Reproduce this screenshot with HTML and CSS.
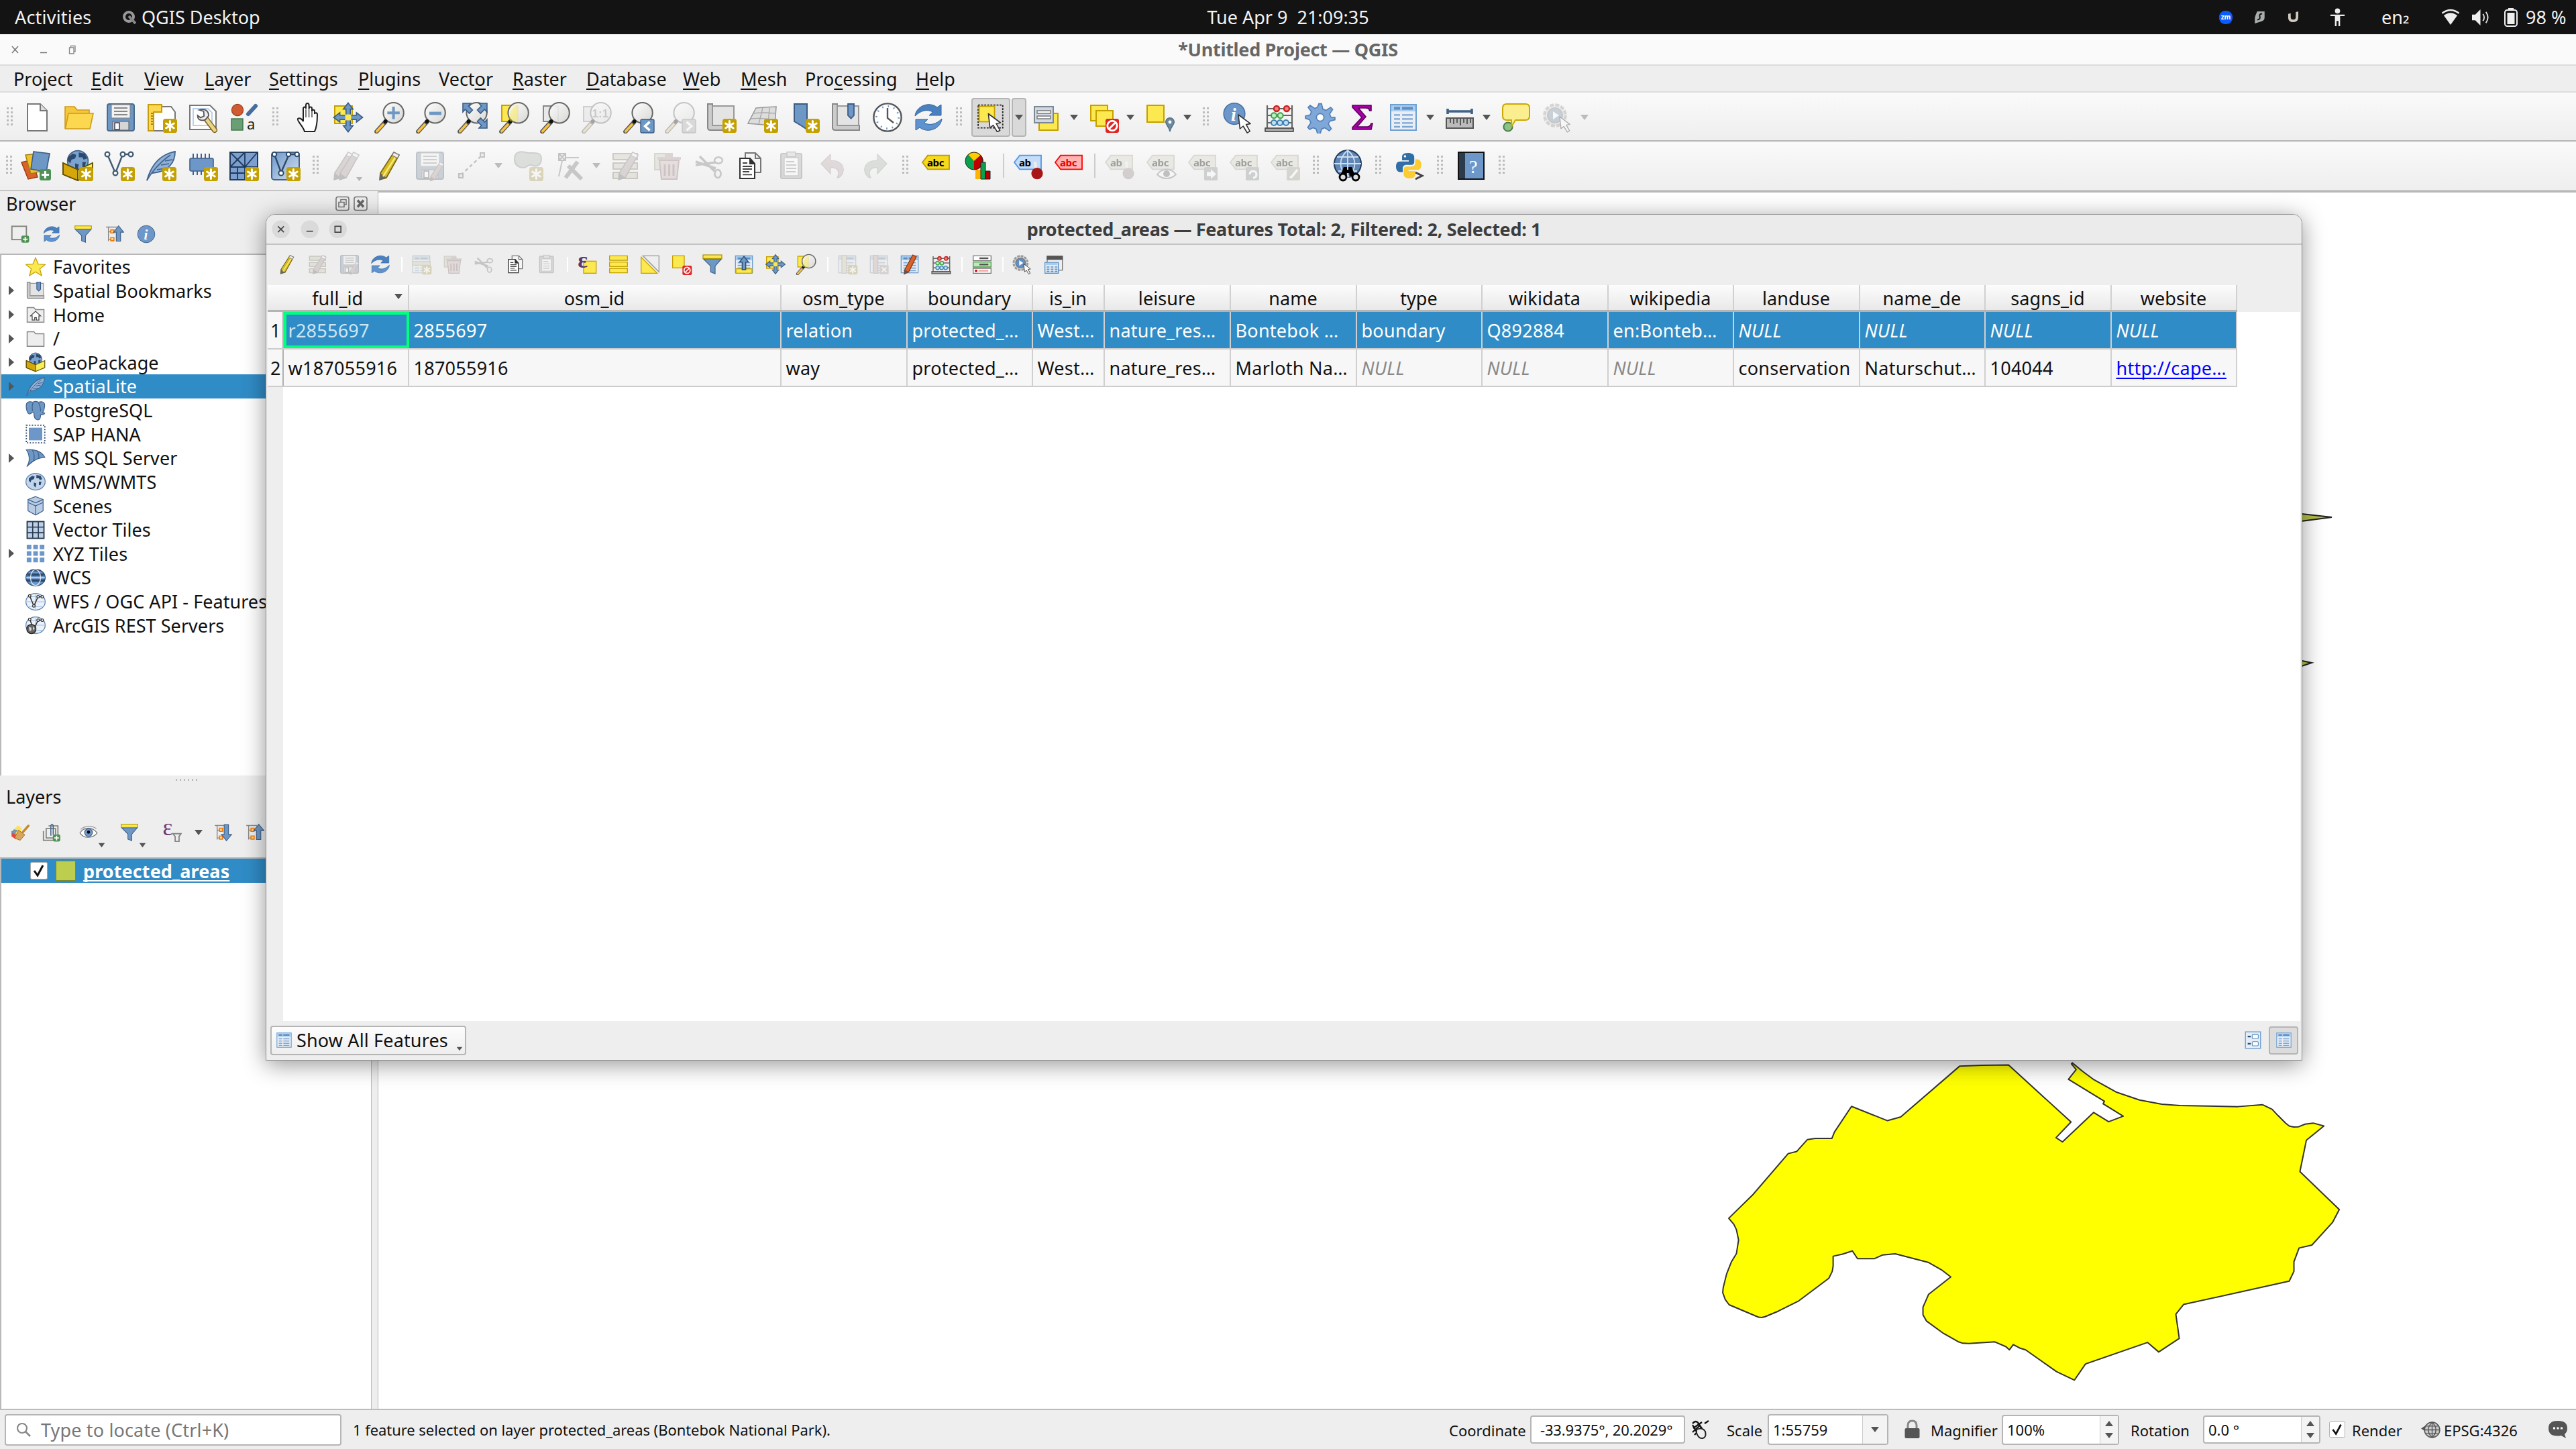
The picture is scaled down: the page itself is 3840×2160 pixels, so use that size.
FILE: index.html
```html
<!DOCTYPE html>
<html lang="en">
<head>
<meta charset="utf-8">
<title>*Untitled Project — QGIS</title>
<link rel="stylesheet" href="styles.css">
</head>
<body>
<svg class="sprite" width="0" height="0" aria-hidden="true">
<defs>
<linearGradient id="gl" x1="0" y1="0" x2="1" y2="1"><stop offset="0" stop-color="#fff"/><stop offset="1" stop-color="#d4d4d0"/></linearGradient>
<linearGradient id="bl" x1="0" y1="0" x2="1" y2="1"><stop offset="0" stop-color="#6d97c9"/><stop offset="1" stop-color="#d7e3f1"/></linearGradient>
<g id="star"><rect x="13" y="13" width="10.500" height="10.500" rx="1.800" fill="#c4a000"/><path d="M18.200 14.800v7M15.300 16.500l5.800 3.500M21.100 16.500l-5.800 3.500" stroke="#fff" stroke-width="1.500" stroke-linecap="round"/></g>
<g id="handle"><path d="M8.600 15.400L2.200 22.600" stroke="#555" stroke-width="3.200" stroke-linecap="round"/><path d="M7 17.400L2.400 22.400" stroke="#f8c243" stroke-width="1.900" stroke-linecap="round"/><circle cx="8.800" cy="15" r="1.500" fill="#111"/></g>
<g id="glass"><circle cx="14.800" cy="8.600" r="7.600" fill="url(#gl)" fill-opacity=".9" stroke="#666" stroke-width="1"/><use href="#handle"/></g>
<g id="cursor"><path d="M0 0l1.200 10.500 2.400-2 3 5 2-1.200-2.800-5 3.200-.6z" fill="#fff" stroke="#333" stroke-width=".8" stroke-linejoin="round"/></g>
<g id="globe-land" fill="#2d4a6e"><path d="M4 8l4-3 3 1-1 3-3 1-1 3-2-2zM13 4l5 1 2 4-3 1-1-2-3 0zM10 13l3 1-1 5-2-2zM16 12l3 0-1 4-2 0z"/></g>
<symbol id="i-new" viewBox="0 0 24 24"><path d="M4.500 2h9.500l5 5v15H4.500z" fill="#fff" stroke="#777"/><path d="M14 2v5h5" fill="#ddd" stroke="#777"/></symbol>
<symbol id="i-open" viewBox="0 0 24 24"><path d="M1.500 4h7l2 2.500h9V20h-18z" fill="#f5c73d" stroke="#cf9b17" stroke-width=".8"/><path d="M4 9h18.500L20 20.500H1.700z" fill="#fbd84f" stroke="#cf9b17" stroke-width=".8"/></symbol>
<symbol id="i-save" viewBox="0 0 24 24"><rect x="2" y="2" width="20" height="20" rx="1.500" fill="#6d97c4" stroke="#4a6a8c"/><rect x="5" y="2.500" width="14" height="10" fill="#f3f3f3" stroke="#888" stroke-width=".6"/><path d="M7 5h10M7 7.500h10M7 10h10" stroke="#888" stroke-width="1.100"/><rect x="6" y="15" width="12" height="6.500" fill="#d5d5d5" stroke="#666" stroke-width=".6"/><rect x="7.500" y="16" width="3.500" height="5" fill="#fff" stroke="#335" stroke-width=".7"/></symbol>
<symbol id="i-layout" viewBox="0 0 24 24"><path d="M4 4h15l3 4v14H4z" fill="#fff" stroke="#777"/><path d="M2 2.500h10V8H6v14H2z" fill="#fbd84f" stroke="#c79b0a"/><path d="M4 9h1.500M4 11h1.500M4 13h1.500M4 15h1.500M4 17h1.500" stroke="#8a6a00" stroke-width=".7"/><use href="#star"/></symbol>
<symbol id="i-manager" viewBox="0 0 24 24"><path d="M2 3h15l4.500 4.500V21H2z" fill="#fff" stroke="#777"/><path d="M4.500 5.500h11l3 3V18h-14z" fill="none" stroke="#bcd0ea"/><path d="M14 13l6.500 8.500" stroke="#7c6420" stroke-width="4" stroke-linecap="round"/><path d="M14.500 13.500l6 8" stroke="#ead489" stroke-width="2.600" stroke-linecap="round"/><path d="M9 6.500l3.300 1 .3 3.500-2.600 1.200-2.200-1.700c0 3.500 2.500 4.300 5.700 3.300l2.500-3c0-4-3-5.500-7-4.300z" fill="#eee" stroke="#555" stroke-width=".9"/></symbol>
<symbol id="i-style" viewBox="0 0 24 24"><circle cx="6.500" cy="6.500" r="4.300" fill="#d05b30" stroke="#9c3b18" stroke-width=".6"/><path d="M20 3.500l-5.500 6" stroke="#456e9e" stroke-width="3" stroke-linecap="round"/><rect x="2" y="13" width="8.500" height="8.500" fill="#6a9f73" stroke="#3f7547" stroke-width=".7"/><text x="13.500" y="21" font-size="11" fill="#222" font-family="Noto Sans">a</text></symbol>
<symbol id="i-pan" viewBox="0 0 24 24"><path d="M9 22.500c-1-4-6-8-5-9.500 1-1 3 0 4 2V5.500c0-1.700 2-1.700 2 0V3c0-2 2.300-2 2.300 0v2.500c0-1.600 2.200-1.600 2.200 0V7.500c0-1.500 2-1.500 2 0v2c.2-1.200 2-1.200 2 .5 0 5-.3 9-2 12.500z" transform="translate(1 0)" fill="#fff" stroke="#222" stroke-width="1"/><path d="M11 6v6M13.300 5.500v6.500M15.500 7v5" stroke="#444" stroke-width=".7"/></symbol>
<symbol id="i-pansel" viewBox="0 0 24 24"><rect x="2" y="3.500" width="13" height="13" fill="#fce94f" stroke="#c4a000"/><path d="M12 1.200l3.600 4.600h-2v4.600h4.600v-2l4.600 3.600-4.600 3.600v-2h-4.600v4.600h2L12 22.800l-3.600-4.600h2v-4.600H5.800v2L1.200 12l4.600-3.600v2h4.600V5.800h-2z" fill="#6d97c4" stroke="#3a5c85" stroke-width=".8"/><rect x="9.800" y="9.800" width="4.400" height="4.400" fill="#fce94f"/></symbol>
<symbol id="i-zin" viewBox="0 0 24 24"><use href="#glass"/><path d="M14.800 4v9.200M10.200 8.600h9.200" stroke="#6d97c4" stroke-width="2"/></symbol>
<symbol id="i-zout" viewBox="0 0 24 24"><use href="#glass"/><path d="M10.500 9h9" stroke="#6d97c4" stroke-width="2.400"/></symbol>
<symbol id="i-zfull" viewBox="0 0 24 24"><use href="#glass"/><path d="M4.500 1.500h6L8.700 3.500l3 3-2.400 2.500-3-3L4.500 8zM22.500 1.500V8l-1.800-2-3 3-2.400-2.500 3-3-1.800-2zM22.500 20h-6l1.800-2-3-3 2.400-2.500 3 3 1.800-2z" fill="#6d97c4" stroke="#3a5c85" stroke-width=".8"/></symbol>
<symbol id="i-zsel" viewBox="0 0 24 24"><rect x="2.500" y="3" width="12" height="12" fill="#fce94f" stroke="#c4a000"/><use href="#glass"/><path d="M14.500 3v12h-6c-1-5 1-11 6-12z" fill="#fce94f" opacity=".45"/></symbol>
<symbol id="i-zlay" viewBox="0 0 24 24"><rect x="3" y="3.500" width="11" height="11.500" fill="#e8e8e8" stroke="#888"/><use href="#glass"/></symbol>
<symbol id="i-znat" viewBox="0 0 24 24"><rect x="2" y="4" width="11" height="11" fill="#ddd" stroke="#888"/><use href="#glass"/><text x="8.300" y="12" font-size="8.500" font-weight="700" fill="#777" font-family="Liberation Sans">1:1</text></symbol>
<symbol id="i-zlast" viewBox="0 0 24 24"><use href="#glass"/><rect x="13.500" y="13.500" width="10" height="10" rx="1" fill="#6d97c4" stroke="#3a5c85" stroke-width=".7"/><path d="M20.300 15.300l-3.500 3.200 3.500 3.200" fill="none" stroke="#fff" stroke-width="1.800"/></symbol>
<symbol id="i-znext" viewBox="0 0 24 24"><use href="#glass"/><rect x="13.500" y="13.500" width="10" height="10" rx="1" fill="#aaa" stroke="#777" stroke-width=".7"/><path d="M16.800 15.300l3.500 3.200-3.500 3.200" fill="none" stroke="#fff" stroke-width="1.800"/></symbol>
<symbol id="i-map" viewBox="0 0 24 24"><path d="M2 2h3.500v16H22v3.500H4c-1.500 0-2-1-2-2z" fill="#ccc" stroke="#888"/><path d="M5.500 3.500H21.500V18H5.500z" fill="#e4e4e4" stroke="#999"/></symbol>
<symbol id="i-newmap" viewBox="0 0 24 24"><use href="#i-map"/><use href="#star"/></symbol>
<symbol id="i-3d" viewBox="0 0 24 24"><path d="M7 5l6-.5 9-.5-1 14-8-.5L1 16.500z" fill="#ddd" stroke="#999" stroke-width=".8"/><path d="M5 9q8-1 16 0M3 13q9-1 18 1M12 5l-3 12M17 5l-1 12" fill="none" stroke="#aaa" stroke-width=".7"/><use href="#star"/></symbol>
<symbol id="i-bmnew" viewBox="0 0 24 24"><path d="M4.500 2h9.500v19l-4.500-3-5-3z" fill="#6d97c4" stroke="#3a5c85"/><use href="#star"/></symbol>
<symbol id="i-bm" viewBox="0 0 24 24"><use href="#i-map"/><path d="M13.500 2h4.500v8.500l-2.200 2.300-2.300-2.300z" fill="#6d97c4" stroke="#3a5c85" stroke-width=".9"/></symbol>
<symbol id="i-clock" viewBox="0 0 24 24"><circle cx="12" cy="12" r="10.300" fill="#fff" stroke="#555" stroke-width="1.200"/><circle cx="12" cy="12" r="8.300" fill="none" stroke="#6d97c4" stroke-width="1.400" stroke-dasharray=".9 3.446"/><path d="M12 5v7.500l4.500 3.500" fill="none" stroke="#555" stroke-width="1.200"/></symbol>
<symbol id="i-refresh" viewBox="0 0 24 24"><path d="M2 11C2.500 4 12-.5 18.500 4.500L21.500 2.500V10.500H12.500L15.200 8C11 5.500 6 7 2 11z" fill="#4a80c0" stroke="#2f629f" stroke-width=".5"/><path d="M22 13c-.5 7-10 11.500-16.500 6.500L2.500 21.500V13.500h9L8.800 16c4.200 2.500 9.200 1 13.200-3z" fill="#5f93cf" stroke="#2f629f" stroke-width=".5"/></symbol>
<symbol id="i-select" viewBox="0 0 24 24"><rect x="1.700" y="2" width="20" height="18.500" fill="none" stroke="#222" stroke-width="1" stroke-dasharray="1.500 1"/><rect x="2.500" y="3" width="12.500" height="12.500" fill="#fce94f" stroke="#c4a000"/><use href="#cursor" transform="translate(10 9) scale(1.100)"/></symbol>
<symbol id="i-form" viewBox="0 0 24 24"><rect x="6" y="9" width="14" height="12.500" fill="#fce94f" stroke="#c4a000"/><rect x="2.500" y="4" width="14" height="12" fill="#cfd8e3" stroke="#7c8896"/><path d="M4.500 7h10v2h-10zM4.500 11h10v2h-10z" fill="#fff" stroke="#777" stroke-width=".7"/></symbol>
<symbol id="i-desel" viewBox="0 0 24 24"><rect x="2" y="3" width="12.500" height="11.500" fill="#fce94f" stroke="#c4a000"/><rect x="6" y="7" width="12.500" height="11.500" fill="#fce94f" stroke="#c4a000"/><rect x="13" y="13" width="10" height="10.500" rx="1.500" fill="#e02525"/><circle cx="18" cy="18.200" r="3.600" fill="none" stroke="#fff" stroke-width="1.400"/><path d="M15.700 20.500l4.600-4.600" stroke="#fff" stroke-width="1.400"/></symbol>
<symbol id="i-selloc" viewBox="0 0 24 24"><rect x="2" y="3" width="12.500" height="12.500" fill="#fce94f" stroke="#c4a000"/><path d="M19 22.500c-1-4-3.200-5-3.200-7a3.200 3.200 0 0 1 6.400 0c0 2-2.200 3-3.200 7z" fill="#6b8aa0" stroke="#4d6a80" stroke-width=".6"/><circle cx="19" cy="15.500" r="1.200" fill="#fff"/></symbol>
<symbol id="i-ident" viewBox="0 0 24 24"><circle cx="9.500" cy="9.300" r="7.900" fill="#6d97c9" stroke="#4671a5" stroke-width=".8"/><text x="7" y="14.500" font-size="14" font-style="italic" font-weight="700" fill="#fff" font-family="Liberation Serif">i</text><use href="#cursor" transform="translate(12.500 10)"/></symbol>
<symbol id="i-abacus" viewBox="0 0 24 24"><path d="M3 3v17M21.500 3v17M3 5.500h18.500M3 10.500h18.500M3 16h18.500" stroke="#666" stroke-width="1.100"/><rect x="1.500" y="20" width="21" height="2.500" fill="#aaa" stroke="#444" stroke-width=".8"/><g fill="#ef8080" stroke="#cc2020" stroke-width="1.200"><circle cx="10" cy="5.500" r="2"/><circle cx="17.500" cy="5.500" r="2"/></g><g fill="#bff0bf" stroke="#3fa04a" stroke-width="1"><circle cx="8" cy="10.600" r="2"/><circle cx="12.800" cy="10.600" r="2"/></g><g fill="#bfe0f5" stroke="#3f7fb0" stroke-width="1"><circle cx="8" cy="16" r="2"/><circle cx="12.500" cy="16" r="2"/><circle cx="17" cy="16" r="2"/></g></symbol>
<symbol id="i-gear" viewBox="0 0 24 24"><g fill="#7fa8d8" stroke="#4f7fb8" stroke-width=".8"><path d="M11 1.800h2l1 4 2.300 1 3.500-2.300 1.500 1.500-2.300 3.500 1 2.300 3 .2v1.800l-4 1-.9 2.200 2.200 3.500-1.500 1.500-3.500-2.300-2.300 1-1 3.500h-2l-1-3.500-2.300-1L4.200 21l-1.500-1.500L5 16l-1-2.300-3-1v-1.800l3.500-.8L5.400 7.800 3 4.500 4.500 3 8 5.300l2-1z"/></g><circle cx="12" cy="12" r="2.800" fill="#fff" stroke="#4f7fb8" stroke-width=".8"/></symbol>
<symbol id="i-sigma" viewBox="0 0 24 24"><path d="M5 3h14v4h-1.200c-.5-1.500-1-2-3-2H9.500l5.500 6.500-6.500 7.500H16c1.800 0 2.500-1 3-2.500h1L19 21H5v-1.500l7-7.500L5 4.500z" fill="#a800a8" stroke="#5d005d" stroke-width=".8"/></symbol>
<symbol id="i-table" viewBox="0 0 24 24"><rect x="2.500" y="2.500" width="19" height="19" fill="#e9eef4" stroke="#6d9fd0"/><rect x="3" y="3" width="18" height="4.500" fill="#a9cbec"/><path d="M5 5.300h4.500M11 5.300h8" stroke="#5a8fc4" stroke-width="2"/><path d="M5 10.200h4.500M11 10.200h8M5 13.200h4.500M11 13.200h8M5 16.200h4.500M11 16.200h8M5 19h4.500M11 19h8" stroke="#7ca6d2" stroke-width="1.200"/></symbol>
<symbol id="i-ruler" viewBox="0 0 24 24"><path d="M3 7.500h18M3 5.500v4M21 5.500v4" stroke="#3f6287" stroke-width="1.800"/><rect x="2" y="12.500" width="20" height="7.500" fill="#bbb" stroke="#555"/><path d="M5 13v3M7.500 13v4M10 13v3M12.500 13v5M15 13v3M17.500 13v4M20 13v3" stroke="#444" stroke-width=".8"/></symbol>
<symbol id="i-tip" viewBox="0 0 24 24"><circle cx="6" cy="19" r="3.300" fill="#8ac387" stroke="#4c7a4a"/><path d="M5 2h14q3 0 3 3v6q0 3-3 3h-7.500L8.500 19l0-5H5q-3 0-3-3V5q0-3 3-3z" fill="#fbee8f" stroke="#c9a800" stroke-width="1"/></symbol>
<symbol id="i-action" viewBox="0 0 24 24"><circle cx="10" cy="10.500" r="7.800" fill="#ddd" stroke="#999" stroke-width="2.200" stroke-dasharray="3 1.080"/><circle cx="10" cy="10.500" r="5.500" fill="#5e8fc8" stroke="#777"/><path d="M8.500 7.500l4.500 3-4.500 3z" fill="#fff"/><use href="#cursor" transform="translate(13.500 11.500) scale(.850)"/></symbol>
<symbol id="i-addlay" viewBox="0 0 24 24"><path d="M1 9.500l8-2 4 13-7 1.500z" fill="#d9622b" stroke="#9d3d10" stroke-width=".7"/><path d="M4 4l9-1 3 13-8 2z" fill="#f0c22b" stroke="#a38008" stroke-width=".7"/><path d="M10 1.500l12 1.500-2.500 13.500-11.500-2z" fill="#6d97c4" stroke="#3a5c85" stroke-width=".8"/><rect x="14.500" y="14.500" width="8.500" height="8.500" rx="1.500" fill="#4f9157"/><path d="M18.700 16v5.500M16 18.700h5.500" stroke="#fff" stroke-width="1.500"/></symbol>
<symbol id="i-gpkg" viewBox="0 0 24 24"><circle cx="12" cy="8.500" r="7.700" fill="#7ba3d0" stroke="#40628c" stroke-width=".8"/><use href="#globe-land" transform="translate(1 -1.500) scale(.900)"/><path d="M1 10l11 5 11-5v8.500L12 23 1 18.500z" fill="#f7ee5c" stroke="#5f4c00" stroke-width=".9"/><path d="M1 10l11 5v8L1 18.500z" fill="#d6a70a" stroke="#5f4c00" stroke-width=".9"/></symbol>
<symbol id="i-gpkgnew" viewBox="0 0 24 24"><use href="#i-gpkg"/><use href="#star"/></symbol>
<symbol id="i-vec" viewBox="0 0 24 24"><path d="M3 3.500l6 14L14.500 3.500h6" fill="none" stroke="#415a73" stroke-width="1.200"/><g fill="#fff" stroke="#415a73" stroke-width="1.100"><circle cx="3" cy="3.500" r="1.700"/><circle cx="9" cy="17.500" r="1.700"/><circle cx="14.500" cy="3.500" r="1.700"/><circle cx="20.500" cy="3.500" r="1.700"/></g></symbol>
<symbol id="i-vecnew" viewBox="0 0 24 24"><use href="#i-vec"/><use href="#star"/></symbol>
<symbol id="i-feather" viewBox="0 0 24 24"><path d="M1.500 23C4 14 9 4 22.500 1.500c0 8-5 15-17 16" fill="#8fb0d8" stroke="#40628c" stroke-width=".9"/><path d="M1.500 23C6 15 12 9 19 4M9 15l6-1M12 11.500l6-1M15 8.500l5.500-1" fill="none" stroke="#40628c" stroke-width=".8"/></symbol>
<symbol id="i-feathernew" viewBox="0 0 24 24"><use href="#i-feather"/><use href="#star"/></symbol>
<symbol id="i-chip" viewBox="0 0 24 24"><path d="M5 3v16M8 3v16M11 3v16M14 3v16M17 3v16" stroke="#40628c" stroke-width="1"/><rect x="2.500" y="6.500" width="17.500" height="9.500" rx="1" fill="#6d97c9" stroke="#40628c" stroke-width=".8"/><use href="#star"/></symbol>
<symbol id="i-mesh" viewBox="0 0 24 24"><path d="M2 2h20.500v20.500H2z" fill="#7ba0cf" stroke="#1f3a5c"/><path d="M2 13h20.500M13 2v20.500M2 2l11 11M13 2L2 13M22 2.500L13 13M2 17.500h11M7.500 13v9" fill="none" stroke="#1f3a5c" stroke-width=".9"/><use href="#star"/></symbol>
<symbol id="i-vgrad" viewBox="0 0 24 24"><rect x="2" y="2" width="20.500" height="20.500" rx="2" fill="url(#bl)" stroke="#40628c"/><path d="M4 3.500l5 13.500L15 3.500h6" fill="none" stroke="#2f4a68" stroke-width="1.200"/><g fill="#fff" stroke="#2f4a68"><circle cx="4" cy="3.500" r="1.600"/><circle cx="9" cy="17.500" r="1.800"/><circle cx="14.500" cy="3.500" r="1.600"/><circle cx="20.800" cy="3.500" r="1.600"/></g><use href="#star"/></symbol>
<g id="pen"><path d="M16 2l4 2-9.500 17-5 1.500.5-5z" fill="#d8bb20" stroke="#6f6113" stroke-width=".8"/><path d="M16 2l4 2-1.300 2.400-4-2.100z" fill="#eee" stroke="#777" stroke-width=".6"/><path d="M6 17.500l4.500 3.500-5 1.800z" fill="#666"/><path d="M17 6L8 20" stroke="#f7ea7c" stroke-width="1.200"/></g>
<g id="greypen"><path d="M16 2l4 2-9.500 17-5 1.500.5-5z" fill="#b89a94" stroke="#7d6a66" stroke-width=".8"/><path d="M16 2l4 2-1.300 2.400-4-2.100z" fill="#eee" stroke="#777" stroke-width=".6"/><path d="M6 17.500l4.500 3.500-5 1.800z" fill="#666"/></g>
<symbol id="i-pencil" viewBox="0 0 24 24"><use href="#pen"/></symbol>
<symbol id="i-pencils" viewBox="0 0 24 24"><g transform="translate(-3.500 0)"><use href="#greypen"/></g><g transform="translate(.5 0)"><use href="#greypen"/></g><path d="M18.500 20.500h4.500l-2.200 3z" fill="#444"/></symbol>
<symbol id="i-savee" viewBox="0 0 24 24"><use href="#i-save"/><g transform="translate(8.500 8) scale(.680)"><use href="#greypen"/></g></symbol>
<symbol id="i-line" viewBox="0 0 24 24"><path d="M4 19L20 4" stroke="#666" stroke-width="1.200" stroke-dasharray="2.500 2"/><path d="M2.500 18h3v3h-3zM18.500 2.500h3v3h-3z" fill="#ddd" stroke="#666"/></symbol>
<symbol id="i-poly" viewBox="0 0 24 24"><path d="M2 7c0-7 7-5.500 10-4.500 5 0 10-1 10 4.500 0 4-3 6-6 5-4-2-5 2-8 1.500C4 13 2 11 2 7z" fill="#aab8aa" stroke="#888"/><use href="#star"/></symbol>
<symbol id="i-vertex" viewBox="0 0 24 24"><path d="M4 20l3-14 12 0" fill="none" stroke="#777"/><path d="M4 3h5v5H4zM4 3l5 5M9 3L4 8" fill="#ddd" stroke="#666"/><path d="M9 21L18 9M11 12l10 10" stroke="#777" stroke-width="3"/></symbol>
<symbol id="i-tedit" viewBox="0 0 24 24"><path d="M2.500 3h18v4.500h-18zM2.500 10h18v4.500h-18zM2.500 17h18v4.500h-18z" fill="#cfc9a4" stroke="#87804d"/><g transform="translate(1 0)"><use href="#greypen"/></g></symbol>
<symbol id="i-trash" viewBox="0 0 24 24"><rect x="2.500" y="3" width="13" height="12" fill="#d8c9a8" stroke="#a89a6c"/><path d="M6 8h14.500l-1.500 14H7.500z" fill="#d6b3b3" stroke="#a66"/><path d="M4.500 5.500h17.500v2H4.500zM10 3.500h6v2h-6z" fill="#c09090"/><path d="M10 11v8.500M13.300 11v8.500M16.500 11v8.500" stroke="#a66" stroke-width="1.500"/></symbol>
<symbol id="i-cut" viewBox="0 0 24 24"><path d="M2 9l15 5M5 5l11 11M2 11.500l15-2" stroke="#777" stroke-width="1.800"/><ellipse cx="19" cy="8" rx="3" ry="2.300" fill="none" stroke="#777" stroke-width="1.300"/><ellipse cx="18.500" cy="18" rx="2.300" ry="3" fill="none" stroke="#777" stroke-width="1.300"/></symbol>
<symbol id="i-copy" viewBox="0 0 24 24"><path d="M8.500 2.500h7.500l4 4V17H8.500z" fill="#f4f4f4" stroke="#777"/><path d="M16 2.500v4h4" fill="none" stroke="#777"/><path d="M4.500 6.500H12l3.500 4v11h-11z" fill="#fff" stroke="#333"/><path d="M12 6.500v4h3.500" fill="#333" stroke="#333"/><path d="M6.500 12.500h7M6.500 14.500h7M6.500 16.500h5M6.500 18.700h7M6.500 10h3.500" stroke="#444" stroke-width=".9"/></symbol>
<symbol id="i-paste" viewBox="0 0 24 24"><rect x="4" y="3" width="15.500" height="18.500" rx="1" fill="#aaa" stroke="#777"/><rect x="6.500" y="6" width="10.500" height="13.500" fill="#fff" stroke="#888" stroke-width=".7"/><rect x="8.500" y="1.800" width="6.500" height="3.500" fill="#ccc" stroke="#777" stroke-width=".7"/><path d="M8 9h6M8 11.500h7.500M8 14h7.500M8 16.500h7" stroke="#888"/></symbol>
<symbol id="i-undo" viewBox="0 0 24 24"><path d="M3 10.500L10 3.500v4.500c8 0 11 5 9 9.500-1 2.500-2.500 3.500-4 3.500 2-4 1-8-5-7.500v4.500z" fill="#c8a8a0" stroke="#a88" stroke-width=".6"/></symbol>
<symbol id="i-redo" viewBox="0 0 24 24"><path d="M21 10.500L14 3.500v4.500c-8 0-11 5-9 9.500 1 2.500 2.500 3.500 4 3.500-2-4-1-8 5-7.500v4.500z" fill="#a8b8a8" stroke="#8a9a8a" stroke-width=".6"/></symbol>
<g id="tag"><path d="M1.500 9.500L5.500 4.300H21.500V14.700H5.500z" stroke-width=".9"/></g>
<symbol id="i-abc" viewBox="0 0 24 24"><use href="#tag" fill="#f5da1e" stroke="#c09a00"/><text x="5" y="12.600" class="t">abc</text></symbol>
<symbol id="i-abcr" viewBox="0 0 24 24"><use href="#tag" fill="#ffb3b3" stroke="#f00"/><text x="5" y="12.600" class="t" fill="#e00">abc</text></symbol>
<symbol id="i-abpin" viewBox="0 0 24 24"><use href="#tag" fill="#c5ddf8" stroke="#4f97e8"/><text x="5" y="12.600" class="t">ab</text><path d="M17 9l1 9" stroke="#eee" stroke-width="2"/><circle cx="18.500" cy="17.800" r="4.300" fill="#a81515"/></symbol>
<symbol id="i-abpin2" viewBox="0 0 24 24"><use href="#tag" fill="#d8d3b8" stroke="#a8a080"/><text x="5" y="12.600" class="t">ab</text><path d="M17 9l1 9" stroke="#eee" stroke-width="2"/><circle cx="18.500" cy="17.800" r="4.300" fill="#a88a8a"/></symbol>
<symbol id="i-abeye" viewBox="0 0 24 24"><use href="#tag" fill="#d8d3b8" stroke="#a8a080"/><text x="5" y="12.600" class="t">abc</text><path d="M9 18.500c4-5 10-5 14 0-4 4-10 4-14 0z" fill="#fff" stroke="#777"/><circle cx="16" cy="18" r="2.500" fill="#666"/></symbol>
<symbol id="i-abmove" viewBox="0 0 24 24"><use href="#tag" fill="#d8d3b8" stroke="#a8a080"/><text x="5" y="12.600" class="t">abc</text><rect x="13" y="13" width="10" height="10" rx="1" fill="#8a9490"/><path d="M15 16.700h3v-2l4 3.500-4 3.500v-2h-3z" fill="#fff"/></symbol>
<symbol id="i-abrot" viewBox="0 0 24 24"><use href="#tag" fill="#d8d3b8" stroke="#a8a080"/><text x="5" y="12.600" class="t">abc</text><rect x="13" y="13" width="10" height="10" rx="1" fill="#8a9490"/><path d="M16 18.500a2.500 2.500 0 1 1 2.500 2.500" fill="none" stroke="#fff" stroke-width="1.600"/></symbol>
<symbol id="i-abedit" viewBox="0 0 24 24"><use href="#tag" fill="#d8d3b8" stroke="#a8a080"/><text x="5" y="12.600" class="t">abc</text><rect x="13" y="13" width="10" height="10" rx="1" fill="#a8a080"/><path d="M21 15l-4 5-1.500 1" stroke="#fff" stroke-width="1.800"/></symbol>
<symbol id="i-pie" viewBox="0 0 24 24"><circle cx="9" cy="8.500" r="6.500" fill="#0aa04e"/><path d="M9 8.500L4.500 3.500A6.500 6.500 0 0 1 14 4z" fill="#ffcc00"/><path d="M9 8.500l5-4.500a6.500 6.500 0 0 1-5 11z" fill="#c00000"/><circle cx="9" cy="8.500" r="6.500" fill="none" stroke="#222" stroke-width=".5"/><path d="M10 15h4v7h-4z" fill="#ffb300"/><path d="M14 9.500h3.500V22H14z" fill="#0aa04e" stroke="#222" stroke-width=".5"/><path d="M17.500 16h3.500v6h-3.500z" fill="#b00000" stroke="#222" stroke-width=".5"/></symbol>
<symbol id="i-meta" viewBox="0 0 24 24"><circle cx="12" cy="10.500" r="10" fill="#5f86b4" stroke="#1f3a5c"/><path d="M2 10.500h20M12 .5v20M4 5.500h16M5 16h14M12 .5c-7 6-7 14 0 20M12 .5c7 6 7 14 0 20" fill="none" stroke="#d0dfef" stroke-width=".9"/><path d="M9 13h2.500v2h1V13H15l2.500 6.500h-4.300v-2h-1.900v2H6.500z"/><circle cx="8.500" cy="20.500" r="2.500" fill="#ddd" stroke="#000" stroke-width="1.400"/><circle cx="18" cy="20.500" r="2.500" fill="#ddd" stroke="#000" stroke-width="1.400"/></symbol>
<symbol id="i-python" viewBox="0 0 24 24"><path d="M11 2.500c-4 0-4.500 1.500-4.500 3.200V8h5v.9H5C2.800 8.900 2 10.500 2 12.800s1 3.900 3 3.900h2V14c0-1.500 1.200-2.600 2.600-2.600h4c1.200 0 2-.9 2-2.100V5.600c0-2-1.800-3.100-4.600-3.100z" fill="#2f6fa5"/><path d="M11.800 21.500c4 0 4.500-1.500 4.500-3.200V16h-5v-.9h6.500c2.200 0 3-1.600 3-3.900s-1-3.900-3-3.900h-1.500V10c0 1.500-1.200 2.600-2.600 2.600h-4c-1.200 0-2 .9-2 2.100v3.700c0 2 1.800 3.100 4.600 3.100z" fill="#fccc33"/><circle cx="8.700" cy="5" r=".9" fill="#fff"/><path d="M16.500 17l5 2.500-5 2.500" fill="none" stroke="#444" stroke-width="1.500"/></symbol>
<symbol id="i-help" viewBox="0 0 24 24"><path d="M2.500 2h19v20h-19z" fill="#6d97c9" stroke="#111"/><path d="M3 2.500h4.500v19H3z" fill="#2b3b4c"/><text x="10.500" y="17.500" font-size="14" fill="#fff" font-family="Liberation Serif">?</text></symbol>
<symbol id="i-dd" viewBox="0 0 14 10"><path d="M1 1h12L7 9z" fill="#555"/></symbol>
<symbol id="i-right" viewBox="0 0 8 14"><path d="M0 0l8 7-8 7z" fill="#555"/></symbol>
<symbol id="i-addl" viewBox="0 0 24 24"><rect x="1.500" y="2" width="18.500" height="17" fill="#eee" stroke="#83847e" stroke-width="1.600"/><rect x="13.500" y="14" width="10" height="9" rx="2" fill="#4f9157"/><path d="M18.500 15.500v6M15.500 18.500h6" stroke="#fff" stroke-width="1.500"/></symbol>
<symbol id="i-filter" viewBox="0 0 24 24"><path d="M2 6h20l-7 8v8.500l-5-2V14z" fill="#6d97c4" stroke="#40628c" stroke-width=".9"/><rect x="1.500" y="1.500" width="21" height="4" fill="#fce94f" stroke="#a89100" stroke-width=".9"/></symbol>
<symbol id="i-coll" viewBox="0 0 24 24"><path d="M1 3h14M4 3v18M4 9h4M4 19h4" fill="none" stroke="#888" stroke-width="1.200"/><path d="M7 6.500h4v4H7zM7 16.500h4v4H7z" fill="#fcd9a0" stroke="#f57900" stroke-width="1.400"/><path d="M17 1.500l6.500 8h-4V21h-5.500V9.500h-3.500z" fill="#6d97c4" stroke="#40628c"/></symbol>
<symbol id="i-exp" viewBox="0 0 24 24"><path d="M1 3h18M4 3v18M4 9h4M4 19h4" fill="none" stroke="#888" stroke-width="1.200"/><path d="M7 6.500h4v4H7zM7 16.500h4v4H7z" fill="#fcd9a0" stroke="#f57900" stroke-width="1.400"/><path d="M16 22.500l6.500-8h-4V2h-5.500v12.500H9.500z" fill="#6d97c4" stroke="#40628c"/></symbol>
<symbol id="i-info" viewBox="0 0 24 24"><circle cx="12" cy="12" r="11" fill="#6d97c9" stroke="#40628c" stroke-width=".8"/><text x="9" y="18.500" font-size="18" font-style="italic" font-weight="700" fill="#fff" font-family="Liberation Serif">i</text></symbol>
<symbol id="i-fav" viewBox="0 0 24 24"><path d="M12 1l3.200 7.600 8.300.5-6.400 5.200 2.200 8L12 17.800 4.700 22.300l2.200-8L.5 9.100l8.300-.5z" fill="#fce94f" stroke="#c4a000"/></symbol>
<symbol id="i-folder" viewBox="0 0 24 24"><path d="M2 3.500h8l2 2.500h10v15H2z" fill="#eee" stroke="#888" stroke-width="1.200"/></symbol>
<symbol id="i-home" viewBox="0 0 24 24"><use href="#i-folder"/><path d="M6 13.500l6-5.500 6 5.500h-2v5h-3v-3h-2v3H8v-5z" fill="#fff" stroke="#444"/></symbol>
<symbol id="i-pg" viewBox="0 0 24 24"><path d="M6 1.500C1 1 .5 5 1 9s2 7 4 7 2-1 3-2l2 .5c0 4 1 8 4 8.500s4-2 4-6c3 .5 5-1 5-2l-2.500-.3C23 10 24 3 21 2c-2-1-4-.5-5.500 0C13 .8 10.500 1 9 2z" fill="#6d97c4" stroke="#40628c"/><path d="M9 3c-1.500 3-1 7-.5 9.500M15.500 3c2 3 2.500 6 2.500 10" fill="none" stroke="#40628c"/></symbol>
<symbol id="i-hana" viewBox="0 0 24 24"><rect x="4" y="4.500" width="16" height="15" fill="#6d97c9"/><rect x="1" y="1.500" width="22" height="21" fill="none" stroke="#2f4a68" stroke-width="1.500" stroke-dasharray="1.500 1.800"/></symbol>
<symbol id="i-mssql" viewBox="0 0 24 24"><path d="M1 2c8-1 18 1 22 9-8 0-14 4-21.500 11C6 16 5 8 1 2z" fill="#6d97c4" stroke="#40628c"/><path d="M8 2c3 5 3 9 1.500 13M14 3.500c2.500 4 2.500 6 1.500 9" fill="none" stroke="#40628c"/></symbol>
<symbol id="i-wms" viewBox="0 0 24 24"><ellipse cx="12" cy="12" rx="11.500" ry="10" fill="#c3d5ea" stroke="#5c82b0"/><use href="#globe-land"/></symbol>
<symbol id="i-scene" viewBox="0 0 24 24"><path d="M12 1l9 3.500v13.500L12 23l-9-5V4.500z" fill="#b8cce4" stroke="#40628c"/><path d="M3 4.500L12 8.500l9-4M3 8l9 4 9-4M12 12v11" fill="none" stroke="#40628c"/></symbol>
<symbol id="i-vt" viewBox="0 0 24 24"><rect x="2" y="2" width="20" height="20" fill="#bcd0ea" stroke="#2a3a4c" stroke-width="1.500"/><path d="M8.600 2v20M15.300 2v20M2 8.600h20M2 15.300h20" stroke="#2a3a4c" stroke-width="1.300"/></symbol>
<symbol id="i-xyz" viewBox="0 0 24 24"><path d="M1.500 1.500h5.500v5.500H1.500zM9.300 1.500h5.500v5.500H9.300zM17 1.500h5.500v5.500H17zM1.500 9.300h5.500v5.500H1.500zM9.300 9.300h5.500v5.500H9.300zM17 9.300h5.500v5.500H17zM1.500 17h5.500v5.500H1.500zM9.300 17h5.500v5.500H9.300zM17 17h5.500v5.500H17z" fill="#6d97c9"/></symbol>
<symbol id="i-wcs" viewBox="0 0 24 24"><ellipse cx="12" cy="12" rx="11.500" ry="10" fill="#6d97c9" stroke="#2d4a6e"/><path d="M2 7h20v3H2zM1 14h22v3H2zM6 2.500h12v2H6z" fill="#2d4a6e"/><ellipse cx="12" cy="12" rx="6" ry="9.500" fill="none" stroke="#e0eaf5"/><path d="M1 12h22" stroke="#e0eaf5"/></symbol>
<symbol id="i-wfs" viewBox="0 0 24 24"><ellipse cx="12" cy="12" rx="11.500" ry="10" fill="#eaf1fa" stroke="#5c82b0"/><path d="M1 12h22M12 2v20M4 6h16M4 18h16" stroke="#a4bfe0" stroke-width=".9"/><path d="M5 5l5 12 5-11h5" fill="none" stroke="#333" stroke-width="1.200"/><g fill="#fff" stroke="#333"><circle cx="5" cy="5" r="1.500"/><circle cx="10" cy="17" r="1.500"/><circle cx="15" cy="6" r="1.500"/><circle cx="20" cy="6" r="1.500"/></g></symbol>
<symbol id="i-arc" viewBox="0 0 24 24"><use href="#i-wfs"/><circle cx="7" cy="16.500" r="5.500" fill="#666" stroke="#222"/><path d="M4 14l3 1 0 3-2 1zM9 13l2 3-2 2z" fill="#ddd"/></symbol>
<symbol id="i-brush" viewBox="0 0 24 24"><path d="M1 11l8-8 5 3-2 8-5 7z" fill="#fce15a"/><path d="M1 10l5 1 1 10-6-4z" fill="#e34a3a"/><path d="M4 8l5 1-4 5-4-2z" fill="#6d97c4"/><path d="M22.500 3.500l-7 8" stroke="#c48b2e" stroke-width="3" stroke-linecap="round"/><path d="M10 9l8 6-6 7-7-3z" fill="#d9a45b" stroke="#9b6a24" stroke-width=".8"/></symbol>
<symbol id="i-group" viewBox="0 0 24 24"><path d="M8 3.500h12v13M5 7h12v12H5zM1.500 10v12H14" fill="none" stroke="#83847e" stroke-width="1.500"/><path d="M11 16V3q1.500-3 3 0v12" fill="none" stroke="#40628c" stroke-width="1.300"/><rect x="13.500" y="14.500" width="9.500" height="9" rx="2" fill="#4f9157"/><path d="M18.300 16v6M15.300 19h6" stroke="#fff" stroke-width="1.500"/></symbol>
<symbol id="i-eye" viewBox="0 0 24 24"><path d="M1 12.500c5-8 16-8 22 0-5 7-17 8-22 0z" fill="#fff" stroke="#777"/><path d="M2 8c5-5 15-5 20-1" fill="none" stroke="#999"/><circle cx="12" cy="12" r="5" fill="#6d97c9" stroke="#40628c"/><circle cx="12" cy="11.500" r="2"/></symbol>
<symbol id="i-eps" viewBox="0 0 24 24"><text x="-.5" y="15" font-size="30" fill="#6b3a75" font-family="Liberation Serif">ε</text><path d="M12.500 13.500h10.500l-2.500 3.500v6.500h-5V17z" fill="#eee" stroke="#888" stroke-width="1.600"/></symbol>
<symbol id="i-epssel" viewBox="0 0 24 24"><rect x="7.500" y="8.500" width="14" height="13.500" fill="#fce94f" stroke="#c4a000"/><text x="1" y="15.500" font-size="26" font-weight="700" fill="#5f3566" font-family="Liberation Serif">ε</text></symbol>
<symbol id="i-selall" viewBox="0 0 24 24"><path d="M2 2.500h20v5H2zM2 9.500h20v5H2zM2 16.500h20v5H2z" fill="#fce94f" stroke="#c4a000"/></symbol>
<symbol id="i-inv" viewBox="0 0 24 24"><path d="M4 2.500h18v18z" fill="#eee" stroke="#999"/><path d="M2 4v18h18z" fill="#fce94f" stroke="#c4a000"/></symbol>
<symbol id="i-des1" viewBox="0 0 24 24"><rect x="2" y="2.500" width="13" height="13.500" fill="#fce94f" stroke="#c4a000"/><rect x="13" y="13.500" width="10.500" height="10.500" rx="1.500" fill="#e02525"/><circle cx="18.200" cy="18.700" r="3.400" fill="none" stroke="#fff" stroke-width="1.300"/><path d="M16 21l4.500-4.500" stroke="#fff" stroke-width="1.300"/></symbol>
<symbol id="i-top" viewBox="0 0 24 24"><use href="#i-table"/><rect x="3" y="17" width="18" height="5" fill="#fce94f" stroke="#c4a000"/><path d="M12 3l5 6.500h-3V18h-4V9.500H7z" fill="#6d97c4" stroke="#2d4a6e"/></symbol>
<symbol id="i-tnew" viewBox="0 0 24 24"><use href="#i-table"/><path d="M2 9h20v4H2z" fill="#d8cf90" stroke="#a8a080"/><use href="#star"/></symbol>
<symbol id="i-colnew" viewBox="0 0 24 24"><use href="#i-table"/><path d="M6 2h5v20H6z" fill="#d8cf90" stroke="#a8a080"/><use href="#star"/></symbol>
<symbol id="i-coldel" viewBox="0 0 24 24"><use href="#i-table"/><path d="M6 2h5v20H6z" fill="#d8a8a0" stroke="#a88080"/><rect x="13" y="13" width="10" height="10" fill="#b89a90"/><path d="M15.500 15.500l5 5M20.500 15.500l-5 5" stroke="#fff" stroke-width="1.500"/></symbol>
<symbol id="i-field" viewBox="0 0 24 24"><use href="#i-table"/><path d="M15.500 1.500l4 2-8.500 17-5 2.500.5-5z" fill="#d9622b" stroke="#7a2f0c" stroke-width=".8"/><path d="M6.500 18l4 2.500-4.500 2.500z" fill="#555"/></symbol>
<symbol id="i-cond" viewBox="0 0 24 24"><path d="M2 2.500h20V8H2z" fill="#fff" stroke="#777"/><path d="M2 9.500h20V15H2z" fill="#bfeab8" stroke="#4c9a48"/><path d="M2 16.500h20V22H2z" fill="#fff" stroke="#777"/><path d="M9 5.200h10M9 12.200h10" stroke="#555" stroke-width="1.800"/><path d="M8 19.200h11" stroke="#f5a0a0" stroke-width="1.800"/><path d="M4 18h2.500v2.500H4z" fill="#c00"/></symbol>
<symbol id="i-dock" viewBox="0 0 24 24"><rect x="4.500" y="3" width="17" height="15.500" fill="#eee" stroke="#777"/><path d="M4 2.500h18v4.500H4z" fill="#555"/><rect x="2" y="10" width="15" height="12" fill="#e4ecf5" stroke="#5a8fc4"/><path d="M3 11.500h13" stroke="#a9cbec" stroke-width="2.500"/><path d="M4 15h3M8.500 15h3M13 15h3M4 17.500h3M8.500 17.500h3M13 17.500h3M4 20h3M8.500 20h3M13 20h3" stroke="#5a8fc4" stroke-width="1.300"/></symbol>
<symbol id="i-formv" viewBox="0 0 24 24"><rect x="2" y="1" width="20" height="22" fill="#e4ecf5" stroke="#6d9fd0" stroke-width="1.200"/><rect x="11" y="4.500" width="8" height="5.500" rx="1" fill="#fff" stroke="#5a8fc4"/><rect x="11" y="14" width="8" height="5.500" rx="1" fill="#fff" stroke="#5a8fc4"/><path d="M5 7.300h4M5 16.800h4" stroke="#2d4a6e" stroke-width="2"/></symbol>
</defs>
</svg>

<header class="topbar">
  <div class="top-left"><span class="activities">Activities</span>
    <svg class="qlogo" viewBox="0 0 20 22"><circle cx="9" cy="10" r="7" fill="none" stroke="#999" stroke-width="4"/><path d="M9 9l10 11" stroke="#888" stroke-width="4"/></svg>
    <span>QGIS Desktop</span></div>
  <div class="clock">Tue Apr 9&nbsp; 21:09:35</div>
  <div class="tray">
    <span class="zm">zm</span>
    <svg class="t-shield" viewBox="0 0 18 22"><path d="M5 1h12v10q0 4-4 6L1 21V13q0-2 1-5t3-7z" fill="#a9adad"/><path d="M13 5q-5 0-4 4 2 5-4 6" fill="none" stroke="#131313" stroke-width="2.200"/></svg>
    <svg class="t-u" viewBox="0 0 18 20"><path d="M1 5l4-1v6q0 4 4 4t4-4V2l4-1v9q0 8-8 8t-8-7z" fill="#cfc9bf"/></svg>
    <svg class="t-person" viewBox="0 0 22 28"><circle cx="11" cy="4.500" r="4" fill="#eee"/><path d="M0 10h22v2.500h-7V28h-2.500v-8h-3v8H7V12.500H0z" fill="#eee"/></svg>
    <span class="t-en">en<span>₂</span></span>
    <svg class="t-wifi" viewBox="0 0 30 26"><path d="M15 25L4.500 10.500q10.500-8 21 0z" fill="#eee"/><path d="M2 7q13-10 26 0" fill="none" stroke="#eee" stroke-width="2.500"/></svg>
    <svg class="t-vol" viewBox="0 0 27 27"><path d="M0 9h5l8-8v25l-8-8H0z" fill="#eee"/><path d="M17 8q3.500 5.500 0 11M21.500 5q6 8.500 0 17" fill="none" stroke="#ddd" stroke-width="2"/></svg>
    <svg class="t-bat" viewBox="0 0 20 28"><path d="M6 0h8v3H6z" fill="#eee"/><rect x="1" y="3" width="18" height="24" rx="3.500" fill="none" stroke="#eee" stroke-width="2"/><rect x="4.500" y="7" width="11" height="17" fill="#eee"/></svg>
    <span class="t-pct">98 %</span>
  </div>
</header>

<div class="titlebar">
  <svg class="winctl" viewBox="0 0 120 20"><path d="M18 5l9 10M27 5l-9 10M60 14.500h10" stroke="#777" stroke-width="1.500"/><path d="M103.500 7h6.500v9h-6.500zM105.500 7V4.500h6.500V13h-2" fill="none" stroke="#888" stroke-width="1.300"/></svg>
  <span class="title">*Untitled Project — QGIS</span>
</div>

<nav class="menubar">
  <span>Pro<u>j</u>ect</span><span><u>E</u>dit</span><span><u>V</u>iew</span><span><u>L</u>ayer</span><span><u>S</u>ettings</span><span><u>P</u>lugins</span><span>Vect<u>o</u>r</span><span><u>R</u>aster</span><span><u>D</u>atabase</span><span><u>W</u>eb</span><span><u>M</u>esh</span><span>Pro<u>c</u>essing</span><span><u>H</u>elp</span>
</nav>

<div class="toolbar tb1">
  <i class="grip first"></i>
  <svg class="ic"><use href="#i-new"/></svg><svg class="ic"><use href="#i-open"/></svg><svg class="ic"><use href="#i-save"/></svg><svg class="ic"><use href="#i-layout"/></svg><svg class="ic"><use href="#i-manager"/></svg><svg class="ic"><use href="#i-style"/></svg>
  <i class="grip"></i>
  <svg class="ic"><use href="#i-pan"/></svg><svg class="ic"><use href="#i-pansel"/></svg><svg class="ic"><use href="#i-zin"/></svg><svg class="ic"><use href="#i-zout"/></svg><svg class="ic"><use href="#i-zfull"/></svg><svg class="ic"><use href="#i-zsel"/></svg><svg class="ic"><use href="#i-zlay"/></svg><svg class="ic off"><use href="#i-znat"/></svg><svg class="ic"><use href="#i-zlast"/></svg><svg class="ic off"><use href="#i-znext"/></svg><svg class="ic"><use href="#i-newmap"/></svg><svg class="ic"><use href="#i-3d"/></svg><svg class="ic"><use href="#i-bmnew"/></svg><svg class="ic"><use href="#i-bm"/></svg><svg class="ic"><use href="#i-clock"/></svg><svg class="ic"><use href="#i-refresh"/></svg>
  <i class="grip"></i>
  <span class="split pressed"><svg class="ic"><use href="#i-select"/></svg><b><svg class="dd"><use href="#i-dd"/></svg></b></span>
  <span class="split"><svg class="ic"><use href="#i-form"/></svg><b><svg class="dd"><use href="#i-dd"/></svg></b></span>
  <span class="split"><svg class="ic"><use href="#i-desel"/></svg><b><svg class="dd"><use href="#i-dd"/></svg></b></span>
  <span class="split"><svg class="ic"><use href="#i-selloc"/></svg><b><svg class="dd"><use href="#i-dd"/></svg></b></span>
  <i class="grip"></i>
  <svg class="ic"><use href="#i-ident"/></svg><svg class="ic"><use href="#i-abacus"/></svg><svg class="ic"><use href="#i-gear"/></svg><svg class="ic"><use href="#i-sigma"/></svg>
  <span class="split"><svg class="ic"><use href="#i-table"/></svg><b><svg class="dd"><use href="#i-dd"/></svg></b></span>
  <span class="split"><svg class="ic"><use href="#i-ruler"/></svg><b><svg class="dd"><use href="#i-dd"/></svg></b></span>
  <svg class="ic"><use href="#i-tip"/></svg>
  <span class="split off"><svg class="ic"><use href="#i-action"/></svg><b><svg class="dd"><use href="#i-dd"/></svg></b></span>
</div>

<div class="toolbar tb2">
  <i class="grip first"></i>
  <svg class="ic"><use href="#i-addlay"/></svg><svg class="ic"><use href="#i-gpkgnew"/></svg><svg class="ic"><use href="#i-vecnew"/></svg><svg class="ic"><use href="#i-feathernew"/></svg><svg class="ic"><use href="#i-chip"/></svg><svg class="ic"><use href="#i-mesh"/></svg><svg class="ic"><use href="#i-vgrad"/></svg>
  <i class="grip"></i>
  <svg class="ic off"><use href="#i-pencils"/></svg><svg class="ic"><use href="#i-pencil"/></svg><svg class="ic off"><use href="#i-savee"/></svg>
  <span class="split off"><svg class="ic"><use href="#i-line"/></svg><b><svg class="dd"><use href="#i-dd"/></svg></b></span>
  <svg class="ic off"><use href="#i-poly"/></svg>
  <span class="split off"><svg class="ic"><use href="#i-vertex"/></svg><b><svg class="dd"><use href="#i-dd"/></svg></b></span>
  <svg class="ic off"><use href="#i-tedit"/></svg><svg class="ic off"><use href="#i-trash"/></svg><svg class="ic off"><use href="#i-cut"/></svg><svg class="ic"><use href="#i-copy"/></svg><svg class="ic off"><use href="#i-paste"/></svg><svg class="ic off"><use href="#i-undo"/></svg><svg class="ic off"><use href="#i-redo"/></svg>
  <i class="grip"></i>
  <svg class="ic"><use href="#i-abc"/></svg><svg class="ic"><use href="#i-pie"/></svg><i class="sep"></i>
  <svg class="ic"><use href="#i-abpin"/></svg><svg class="ic"><use href="#i-abcr"/></svg><i class="sep"></i>
  <svg class="ic off"><use href="#i-abpin2"/></svg><svg class="ic off"><use href="#i-abeye"/></svg><svg class="ic off"><use href="#i-abmove"/></svg><svg class="ic off"><use href="#i-abrot"/></svg><svg class="ic off"><use href="#i-abedit"/></svg>
  <i class="grip"></i><svg class="ic"><use href="#i-meta"/></svg>
  <i class="grip"></i><svg class="ic"><use href="#i-python"/></svg>
  <i class="grip"></i><svg class="ic"><use href="#i-help"/></svg>
  <i class="grip"></i>
</div>

<main class="work">
  <aside class="dock">
    <div class="dock-title"><span>Browser</span>
      <svg class="dockbtns" viewBox="0 0 48 24"><g fill="none" stroke="#777" stroke-width="1.600"><rect x="1" y="1.500" width="19" height="20" rx="3"/><rect x="28" y="1.500" width="19" height="20" rx="3"/><path d="M5 9.500h8v7H5zM8 9V5.500h8V13h-3"/></g><path d="M33 6.500l9 10M42 6.500l-9 10" stroke="#666" stroke-width="3.500"/></svg></div>
    <div class="dock-tools b"><svg><use href="#i-addl"/></svg><svg><use href="#i-refresh"/></svg><svg><use href="#i-filter"/></svg><svg><use href="#i-coll"/></svg><svg><use href="#i-info"/></svg></div>
    <ul class="tree">
      <li><i></i><svg><use href="#i-fav"/></svg>Favorites</li>
      <li><i><svg><use href="#i-right"/></svg></i><svg><use href="#i-bm"/></svg>Spatial Bookmarks</li>
      <li><i><svg><use href="#i-right"/></svg></i><svg><use href="#i-home"/></svg>Home</li>
      <li><i><svg><use href="#i-right"/></svg></i><svg><use href="#i-folder"/></svg>/</li>
      <li><i><svg><use href="#i-right"/></svg></i><svg><use href="#i-gpkg"/></svg>GeoPackage</li>
      <li class="sel"><i><svg><use href="#i-right"/></svg></i><svg><use href="#i-feather"/></svg>SpatiaLite</li>
      <li><i></i><svg><use href="#i-pg"/></svg>PostgreSQL</li>
      <li><i></i><svg><use href="#i-hana"/></svg>SAP HANA</li>
      <li><i><svg><use href="#i-right"/></svg></i><svg><use href="#i-mssql"/></svg>MS SQL Server</li>
      <li><i></i><svg><use href="#i-wms"/></svg>WMS/WMTS</li>
      <li><i></i><svg><use href="#i-scene"/></svg>Scenes</li>
      <li><i></i><svg><use href="#i-vt"/></svg>Vector Tiles</li>
      <li><i><svg><use href="#i-right"/></svg></i><svg><use href="#i-xyz"/></svg>XYZ Tiles</li>
      <li><i></i><svg><use href="#i-wcs"/></svg>WCS</li>
      <li><i></i><svg><use href="#i-wfs"/></svg>WFS / OGC API - Features</li>
      <li><i></i><svg><use href="#i-arc"/></svg>ArcGIS REST Servers</li>
    </ul>
    <div class="splitter"></div>
    <div class="dock-title layers"><span>Layers</span></div>
    <div class="dock-tools l">
      <svg><use href="#i-brush"/></svg><svg><use href="#i-group"/></svg>
      <span class="menu-ic"><svg><use href="#i-eye"/></svg><svg class="dd"><use href="#i-dd"/></svg></span>
      <span class="menu-ic"><svg><use href="#i-filter"/></svg><svg class="dd"><use href="#i-dd"/></svg></span>
      <svg><use href="#i-eps"/></svg><svg class="dd"><use href="#i-dd"/></svg><svg><use href="#i-exp"/></svg><svg><use href="#i-coll"/></svg>
    </div>
    <div class="layer-tree"><div class="layer"><svg class="check" viewBox="0 0 26 26"><rect x=".5" y=".5" width="25" height="25" rx="2" fill="#fff" stroke="#aaa"/><path d="M6 13l5 7 8-15" fill="none" stroke="#111" stroke-width="3"/></svg><i class="swatch"></i><span>protected_areas</span></div></div>
  </aside>
  <section class="canvas">
    <svg viewBox="0 0 3276 1813">
      <g fill="#b5c243" stroke="#222" stroke-width="2"><path d="M2858 478l54 6-54 7z"/><path d="M2858 696l24 5-24 8z"/></g>
      <g transform="translate(1976 1193) scale(.6378 .3954)"><path vector-effect="non-scaling-stroke" fill="#ffff00" stroke="#333" stroke-width="2" stroke-linejoin="round" d="M598 276L650 273 712 272 858 487 823 546 838 562 911 451 946 486 980 465 933 418 936 409 852 326 870 289 859 268 861 264 885 296 912 328 965 375 1018 404 1070 420 1112 425 1248 429 1306 422 1328 439 1342 463 1360 492 1368 502 1378 506 1390 505 1405 495 1424 491 1449 502 1408 556 1393 674 1485 817 1469 866 1421 951 1391 962 1379 1014 1379 1050 1368 1087 1121 1175 1103 1212 1111 1303 1063 1354 1037 1318 892 1399 866 1460 824 1428 752 1346 738 1339 723 1326 714 1346 706 1334 680 1316 619 1322 605 1321 594 1315 560 1284 520 1237 512 1214 512 1185 525 1137 577 1071 555 1044 524 1016 447 984 418 988 399 1002 359 1002 347 973 324 985 302 993 302 1030 300 1050 292 1076 222 1161 174 1200 143 1221 135 1224 128 1223 122 1219 59 1176 50 1157 44 1130 45 1112 53 1060 64 1015 76 983 81 932 76 893 70 873 58 850 115 760 197 606 217 598 242 553 260 549 299 549 305 525 345 428 429 482 460 468z"/></g>
    </svg>
  </section>
</main>

<footer class="status">
  <div class="locator"><svg viewBox="0 0 24 24"><circle cx="10" cy="10" r="7" fill="none" stroke="#888" stroke-width="2.200"/><path d="M15 15l7 7" stroke="#888" stroke-width="2.600"/></svg><span>Type to locate (Ctrl+K)</span></div>
  <span class="msg">1 feature selected on layer protected_areas (Bontebok National Park).</span>
  <span class="lab l1">Coordinate</span><span class="field f1">-33.9375°, 20.2029°</span>
  <svg class="mouse" viewBox="0 0 30 30"><path d="M4 6q5-6 9 0l5 8M5 13L18 4M4 19L16 8M7 23L18 11M22 6l6-4M4 8l8 14" stroke="#111" stroke-width="2.300" fill="none"/><path d="M10 15q9-4 13 3 2 9-4 10T10 20z" fill="#eee" stroke="#222" stroke-width="2"/></svg>
  <span class="lab l2">Scale</span><span class="field f2">1:55759<b><svg class="dd"><use href="#i-dd"/></svg></b></span>
  <svg class="lock" viewBox="0 0 24 30"><path d="M5.500 14V9q0-7 6.500-7t6.500 7v5" fill="none" stroke="#888" stroke-width="3"/><rect x="1" y="13" width="22" height="15" rx="2" fill="#555"/></svg>
  <span class="lab l3">Magnifier</span><span class="field f3">100%<b class="spin"><svg class="dd up"><use href="#i-dd"/></svg><svg class="dd"><use href="#i-dd"/></svg></b></span>
  <span class="lab l4">Rotation</span><span class="field f4">0.0 °<b class="spin"><svg class="dd up"><use href="#i-dd"/></svg><svg class="dd"><use href="#i-dd"/></svg></b></span>
  <svg class="check s" viewBox="0 0 26 26"><rect x=".5" y=".5" width="25" height="25" rx="2" fill="#fff" stroke="#aaa"/><path d="M6 13l5 7 8-15" fill="none" stroke="#111" stroke-width="3"/></svg>
  <span class="lab l5">Render</span>
  <svg class="crs" viewBox="0 0 30 26"><circle cx="16" cy="13" r="11" fill="#ccc" stroke="#555" stroke-width="1.500"/><path d="M5 13h22M16 2v22M7 7.500h18M7 18.500h18M16 2q-11 11 0 22M16 2q11 11 0 22" fill="none" stroke="#555" stroke-width="1.300"/><path d="M0 11l6-4v8z" fill="#555"/></svg>
  <span class="lab l6">EPSG:4326</span>
  <svg class="bubble" viewBox="0 0 30 28"><path d="M15 1q14 0 14 11 0 6-4 9l2 6-7-4q-19 3-19-11Q1 1 15 1z" fill="#555"/><path d="M8 12h3M13.500 12h3M19 12h3" stroke="#fff" stroke-width="3"/></svg>
</footer>

<section class="window">
  <div class="w-title"><div class="w-ctl">
    <svg viewBox="0 0 28 28"><circle cx="14" cy="14" r="13.500" fill="#dadada"/><path d="M9.500 9.500l9 9M18.500 9.500l-9 9" stroke="#444" stroke-width="1.700"/></svg><svg viewBox="0 0 28 28"><circle cx="14" cy="14" r="13.500" fill="#dadada"/><path d="M9 17h10" stroke="#444" stroke-width="1.700"/></svg><svg viewBox="0 0 28 28"><circle cx="14" cy="14" r="13.500" fill="#dadada"/><rect x="9.500" y="9.500" width="9" height="9" fill="none" stroke="#444" stroke-width="1.700"/></svg></div>
    <span>protected_areas — Features Total: 2, Filtered: 2, Selected: 1</span></div>
  <div class="w-tools">
    <svg><use href="#i-pencil"/></svg><svg class="off"><use href="#i-tedit"/></svg><svg class="off"><use href="#i-savee"/></svg><svg><use href="#i-refresh"/></svg><i></i>
    <svg class="off"><use href="#i-tnew"/></svg><svg class="off"><use href="#i-trash"/></svg><svg class="off"><use href="#i-cut"/></svg><svg><use href="#i-copy"/></svg><svg class="off"><use href="#i-paste"/></svg><i></i>
    <svg><use href="#i-epssel"/></svg><svg><use href="#i-selall"/></svg><svg><use href="#i-inv"/></svg><svg><use href="#i-des1"/></svg><svg><use href="#i-filter"/></svg><svg><use href="#i-top"/></svg><svg><use href="#i-pansel"/></svg><svg><use href="#i-zsel"/></svg><i></i>
    <svg class="off"><use href="#i-colnew"/></svg><svg class="off"><use href="#i-coldel"/></svg><svg><use href="#i-field"/></svg><svg><use href="#i-abacus"/></svg><i></i>
    <svg><use href="#i-cond"/></svg><i></i><svg><use href="#i-action"/></svg><svg><use href="#i-dock"/></svg>
  </div>
  <div class="grid">
    <div class="head-strip"><div class="row head"><span class="first">full_id<svg class="dd"><use href="#i-dd"/></svg></span><span>osm_id</span><span>osm_type</span><span>boundary</span><span>is_in</span><span>leisure</span><span>name</span><span>type</span><span>wikidata</span><span>wikipedia</span><span>landuse</span><span>name_de</span><span>sagns_id</span><span>website</span></div></div>
    <div class="row selected"><b>1</b><span class="cur">r2855697</span><span>2855697</span><span>relation</span><span>protected_…</span><span>West…</span><span>nature_res…</span><span>Bontebok …</span><span>boundary</span><span>Q892884</span><span>en:Bonteb…</span><span><em>NULL</em></span><span><em>NULL</em></span><span><em>NULL</em></span><span><em>NULL</em></span></div>
    <div class="row"><b>2</b><span>w187055916</span><span>187055916</span><span>way</span><span>protected_…</span><span>West…</span><span>nature_res…</span><span>Marloth Na…</span><span><em>NULL</em></span><span><em>NULL</em></span><span><em>NULL</em></span><span>conservation</span><span>Naturschut…</span><span>104044</span><span><a>http://cape…</a></span></div>
  </div>
  <div class="w-foot">
    <div class="show"><svg><use href="#i-table"/></svg><span>Show All Features</span><svg class="dd"><use href="#i-dd"/></svg></div>
    <div class="views"><svg><use href="#i-formv"/></svg><b><svg><use href="#i-table"/></svg></b></div>
  </div>
</section>
</body>
</html>
```

FILE: styles.css
```css
* { box-sizing: border-box; }
body {
  margin: 0; width: 3840px; height: 2160px; overflow: hidden; position: relative;
  display: flex; flex-direction: column;
  background: #eee; color: #111;
  font: 27px/1 "Noto Sans", "Open Sans", sans-serif;
  white-space: nowrap;
}
svg { display: block; flex: none; }
i, b { font-style: normal; font-weight: 400; }
.sprite { position: absolute; }
.t { font: 700 7.5px "Noto Sans", sans-serif; letter-spacing: -.2px; }
.dd { width: 14px; height: 10px; }
.up { transform: scaleY(-1); }
.off { opacity: .35; filter: grayscale(.55); }

.topbar { height: 51px; background: #131313; color: #f2f2f2; display: grid; grid-template-columns: 1fr auto 1fr; align-items: center; }
.top-left { display: flex; align-items: center; padding-left: 22px; }
.activities { width: 161px; letter-spacing: .2px; }
.qlogo { width: 20px; height: 22px; margin-right: 8px; }
.tray { display: flex; align-items: center; justify-content: flex-end; padding-right: 16px; }
.zm { width: 20px; height: 20px; border-radius: 9px; background: #0b5cff; color: #fff; font-size: 10px; font-weight: 700; line-height: 18px; text-align: center; margin-right: 32px; }
.t-shield { width: 17px; height: 20px; margin-right: 33px; }
.t-u { width: 17px; height: 19px; margin-right: 46px; }
.t-person { width: 23px; height: 27px; margin-right: 54px; }
.t-en { width: 88px; }
.t-en span { vertical-align: 4px; line-height: 0; }
.t-wifi { width: 30px; height: 25px; margin-right: 16px; }
.t-vol { width: 28px; height: 26px; margin-right: 21px; }
.t-bat { width: 20px; height: 28px; margin-right: 12px; }
.t-pct { width: 59px; }

.titlebar { height: 47px; background: #fafafa; border-bottom: 2px solid #dcdcdc; display: grid; grid-template-columns: 1fr auto 1fr; align-items: center; }
.winctl { width: 120px; height: 20px; }
.title { color: #666; font-weight: 700; letter-spacing: -.3px; }

.menubar { height: 40px; border-bottom: 2px solid #ddd; display: grid; align-items: center;
  grid-template-columns: 116px 79px 90px 96px 133px 120px 110px 110px 144px 86px 96px 165px 90px; }
.menubar span { padding-left: 20px; line-height: 37px; }
.menubar u { text-underline-offset: 4px; text-decoration-thickness: 2px; text-decoration-skip-ink: none; }

.toolbar { display: flex; align-items: center; background: linear-gradient(#fafafa, #eee); }
.tb1 { height: 73px; border-bottom: 2px solid #b6b6b6; padding: 2px 0 0 1.5px; }
.tb2 { height: 74px; border-bottom: 2px solid #c4c4c4; }
.ic { width: 48px; height: 48px; margin: 0 6.9px; }
.grip { width: 31px; height: 32px; background: radial-gradient(circle at 1.5px 1.5px, #bbb 1.4px, transparent 1.6px) 0 0 / 6px 6px; background-clip: content-box; background-origin: content-box; padding: 1px 10px; }
.grip.first { width: 23.6px; padding: 1px 5px 1px 8.6px; }
.tb2 .grip:not(.first) { width: 30.6px; }
.sep { width: 13px; height: 36px; background: linear-gradient(#ccc, #ccc) 6px 0 / 2px 100% no-repeat; }
.split { display: flex; align-items: center; width: 84.2px; }
.split b { width: 22px; display: flex; justify-content: center; align-items: center; margin-left: -2px; }
.pressed .ic { margin: 0 2px 0 1.5px; padding: 5px; width: 58px; height: 58px; border: 2px solid #b5b5b5; border-radius: 4px; background: #d9d9d9; }
.pressed b { height: 58px; border: 2px solid #b5b5b5; border-radius: 4px; background: #d9d9d9; margin-left: 0; }

.work { height: 1815px; display: flex; gap: 9px; }
.dock { width: 554px; display: flex; flex-direction: column; }
.dock-title { height: 42px; display: flex; justify-content: space-between; align-items: center; padding: 0 6px 5px 9px; }
.dockbtns { width: 48px; height: 24px; }
.dock-tools { display: flex; align-items: center; }
.dock-tools svg { width: 28px; height: 28px; }
.dock-tools .dd { width: 14px; height: 10px; }
.dock-tools.b { height: 51px; gap: 19px; padding: 0 0 8px 16px; }
.tree { list-style: none; margin: 0; padding: 0; height: 778px; background: #fff; border: 2px solid #b8b8b8; border-right-width: 1px; border-bottom: 0; overflow: hidden; letter-spacing: .05px; }
.tree li { display: flex; align-items: center; height: 35.63px; }
.tree li > i { width: 36px; padding-left: 11px; }
.tree li > i svg { width: 8px; height: 14px; }
.tree li > svg { width: 30px; height: 30px; margin-right: 11px; }
.tree .sel { background: #308cc6; color: #fff; }
.splitter { height: 14px; background: repeating-linear-gradient(90deg, #bbb 0 2px, transparent 2px 6px) 262px 5px / 32px 3px no-repeat; }
.dock-title.layers { height: 40px; }
.dock-tools.l { height: 68px; padding: 0 0 6px 16px; }
.dock-tools.l > svg:nth-child(1) { margin-right: 19px; }
.dock-tools.l > svg:nth-child(2) { margin-right: 27px; }
.menu-ic { display: flex; width: 61px; position: relative; }
.menu-ic .dd { position: absolute; left: 28px; top: 29px; width: 11px; height: 8px; }
.dock-tools.l > svg:nth-child(5) { margin: 0 18px 0 3px; }
.dock-tools.l > svg:nth-child(6) { margin-right: 16px; }
.dock-tools.l > svg:nth-child(7) { margin-right: 19px; }
.layer-tree { flex: 1; background: #fff; border: 2px solid #b8b8b8; border-right-width: 1px; border-bottom: 0; }
.layer { display: flex; align-items: center; height: 36px; background: #308cc6; color: #fff; font-weight: 700; padding-left: 43px; }
.layer span { text-decoration: underline; text-decoration-thickness: 2px; text-underline-offset: 3px; text-decoration-skip-ink: none; letter-spacing: .1px; }
.check { width: 26px; height: 26px; margin-right: 12px; }
.swatch { width: 30px; height: 30px; background: #bdcd4e; border: 1px solid #7d8a2b; margin-right: 11px; }
.canvas { flex: 1; background: #fff; border: solid #b8b8b8; border-width: 2px 0 0 1px; }
.canvas svg { width: 3276px; height: 1813px; }

.status { height: 60px; border-top: 2px solid #bcbcbc; display: flex; align-items: center; font-size: 22px; padding-left: 7px; }
.locator { width: 502px; height: 47px; background: #fff; border: 2px solid #b5b5b5; border-radius: 4px; display: flex; align-items: center; gap: 14px; padding-left: 14px; font-size: 27px; color: #777; letter-spacing: .15px; }
.locator svg { width: 24px; height: 24px; }
.msg { width: 1634px; padding-left: 17px; letter-spacing: -.06px; }
.lab { padding-top: 1px; }
.l1 { width: 138px; padding-left: 17px; }
.field { background: #fff; border: 2px solid #b5b5b5; border-radius: 4px; display: flex; align-items: center; height: 42px; padding-left: 6px; justify-content: space-between; }
.field b { align-self: stretch; width: 27px; border-left: 1px solid #ccc; background: #f4f4f4; display: flex; flex-direction: column; justify-content: center; align-items: center; gap: 8px; }
.f1 { width: 231px; padding-left: 13px; letter-spacing: -.15px; }
.mouse { width: 30px; height: 30px; margin: 0 25px 0 7px; }
.l2 { width: 61px; }
.f2 { width: 180px; height: 46px; }
.f2 b { width: 37px; }
.lock { width: 25px; height: 30px; margin: 0 15px 0 23px; }
.l3 { width: 106px; }
.f3, .f4 { width: 175px; }
.f3 { height: 45px; }
.l4 { width: 125px; padding-left: 17px; }
.check.s { width: 24px; height: 24px; margin: 0 10px 0 13px; }
.l5 { width: 103px; }
.crs { width: 31px; height: 27px; margin-right: 3px; }
.l6 { width: 155px; }
.bubble { width: 30px; height: 28px; }

.window { position: absolute; left: 396px; top: 319px; width: 3036px; height: 1262px; display: flex; flex-direction: column;
  background: #eee; border: 1px solid #8d8d8d; border-radius: 14px 14px 0 0; box-shadow: 0 6px 34px rgba(0,0,0,.42); }
.w-title { height: 45px; border-bottom: 2px solid #c4c4c4; border-radius: 13px 13px 0 0; background: #ebebeb; display: grid; grid-template-columns: 1fr auto 1fr; align-items: center; color: #3d3d3d; font-weight: 700; letter-spacing: -.32px; }
.w-ctl { display: flex; gap: 15px; padding-left: 8px; }
.w-ctl svg { width: 27.5px; height: 27.5px; }
.w-tools { height: 60px; display: flex; align-items: center; padding: 0 0 3px 7px; }
.w-tools svg { width: 32px; height: 32px; margin: 0 7.35px; }
.w-tools i { width: 14px; height: 22px; background: linear-gradient(#fff, #fff) 7px 0 / 2px 100% no-repeat; }
.grid { height: 1097px; margin: 0 2px; background: linear-gradient(90deg, #eee 23px, #fff 23px); }
.head-strip { background: #eee; }
.row { display: grid; grid-template-columns: 23.5px 187px 555px 188px 187px 107px 188px 188px 187px 188px 187px 188px 187px 188px 187px; width: 2935.5px; height: 56px; border-bottom: 2px solid #ccc; background: #f7f7f7; letter-spacing: .25px; }
.row > * { display: flex; align-items: center; overflow: hidden; padding-left: 7px; border-right: 2px solid #d0d0d0; }
.row > b { padding-left: 4px; border-color: #b0b0b0; }
.head { height: 40px; background: linear-gradient(#fcfcfc, #e9e9e9); border-bottom: 3px solid #b4b4b4; letter-spacing: .1px; }
.head > * { justify-content: center; padding: 1px 0 0; }
.head .first { grid-column: span 2; position: relative; }
.head .dd { position: absolute; right: 7px; top: 12px; }
.selected > span { background: #308cc6; color: #fff; }
.selected .cur { border: 4px solid #00ff7f; padding-left: 3px; color: #cfe5f5; }
.row em { color: #888; }
.selected em { color: #fff; }
.row a { color: #0000ff; text-decoration: underline; text-decoration-thickness: 2px; text-underline-offset: 4px; text-decoration-skip-ink: none; }
.w-foot { flex: 1; display: flex; justify-content: space-between; align-items: center; padding: 0 5px 1px 6px; }
.show { width: 292px; height: 44px; display: flex; align-items: center; gap: 5px; padding-left: 5px; border: 2px solid #b5b5b5; border-radius: 4px; background: linear-gradient(#fdfdfd, #eee); position: relative; letter-spacing: .15px; }
.show svg { width: 27px; height: 27px; }
.show .dd { position: absolute; right: 3px; bottom: 4px; width: 10px; height: 7px; }
.views { display: flex; align-items: center; gap: 10px; }
.views svg { width: 27px; height: 27px; }
.views b { width: 44px; height: 42px; display: flex; align-items: center; justify-content: center; background: #dcdcdc; border: 2px solid #b5b5b5; border-radius: 4px; }
```
